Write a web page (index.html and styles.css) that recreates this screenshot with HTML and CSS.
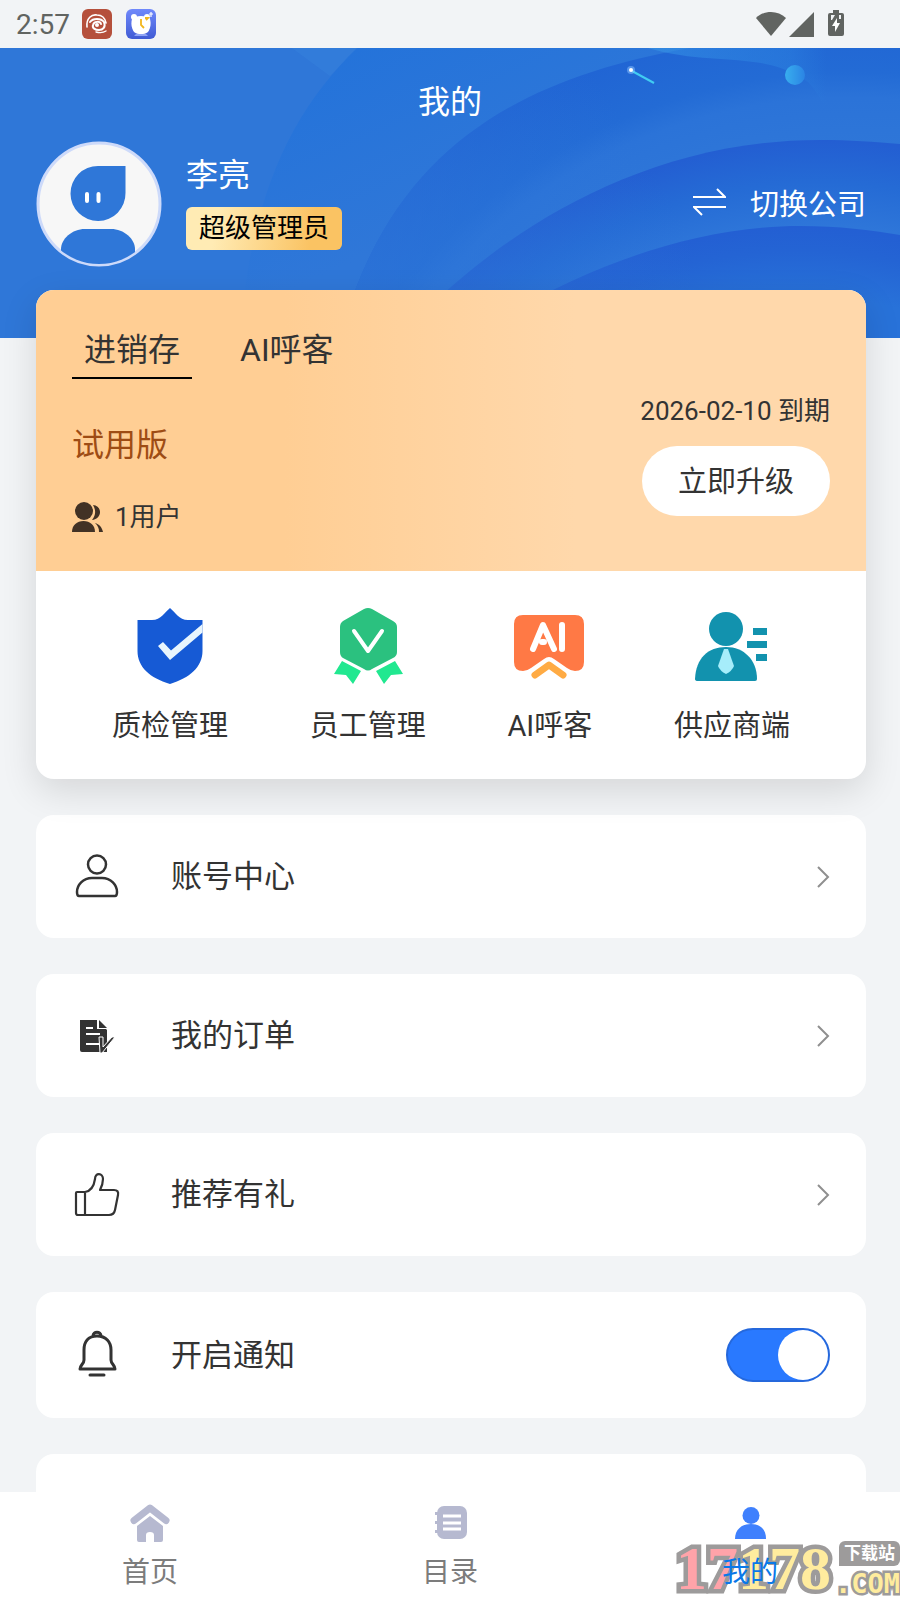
FILE: index.html
```html
<!DOCTYPE html>
<html lang="zh-CN">
<head>
    <meta charset="UTF-8">
    <meta name="viewport" content="width=device-width, initial-scale=1.0">
    <title>我的</title>
    <link rel="stylesheet" href="styles.css">
</head>
<body>
    <div class="app">
        <div class="status-bar">
            <span class="time">2:57</span>
            <svg class="app-icon" viewBox="0 0 30 30">
                <rect width="30" height="30" rx="6" fill="#b5503c"/>
                <g fill="none" stroke="#fff" stroke-linecap="round">
                    <path d="M5 18C4 9 10 5 15 6c5 0 8 3 9 8" stroke-width="1.6"/>
                    <path d="M8 13c3-4 11-4 14 0 2 5-1 8-5 8-4 0-7-2-6-5 1-4 7-4 8-1" stroke-width="2"/>
                    <path d="M14 23c4 1 7 1 10-1" stroke-width="1.4"/>
                </g>
                <circle cx="15" cy="16" r="2" fill="#fff"/>
            </svg>
            <svg class="app-icon" viewBox="0 0 30 30">
                <defs>
                    <linearGradient id="clockBg" x1="0" y1="0" x2="0" y2="1">
                        <stop offset="0" stop-color="#7089fb"/>
                        <stop offset="1" stop-color="#405bd4"/>
                    </linearGradient>
                </defs>
                <rect width="30" height="30" rx="6" fill="url(#clockBg)"/>
                <circle cx="8" cy="8" r="3" fill="#fff"/>
                <circle cx="21" cy="8" r="3" fill="#fff"/>
                <path d="M6 10c3-4 15-4 18 0 1 4 1 8-2 13-4 3-10 3-14 0-3-5-3-9-2-13z" fill="#fff"/>
                <path d="M23 5h4M25 3v5" stroke="#fff" stroke-width="1.2"/>
                <path d="M15 10v6l3 3M19 9h3l-2 2" fill="none" stroke="#f2b61c" stroke-width="1.8"/>
                <path d="M8 27h14l-2-2H10z" fill="#8fa3f5"/>
            </svg>
            <div class="status-right">
                <svg width="90" height="30" viewBox="0 0 90 30" fill="#616461">
                    <path d="M0 9C8 1 22 1 30 9L15 27z"/>
                    <path d="M33 28L58 3V28z"/>
                    <path d="M77 1h6v3h3q2 0 2 2v19q0 2-2 2H74q-2 0-2-2V6q0-2 2-2h3z"/>
                    <path d="M75 6h4l-3 5h-1zM85 6h-2v4h2z" fill="#f2f4f6"/>
                    <path d="M81 9l-5 8h3v6l5-9h-3z" fill="#fff"/>
                </svg>
            </div>
        </div>

        <main class="content">
            <header class="header">
                <svg class="header-bg" viewBox="0 0 900 290" preserveAspectRatio="xMidYMin slice">
                    <defs>
                        <radialGradient id="ringA" gradientUnits="userSpaceOnUse" cx="850" cy="600" r="640">
                            <stop offset="0.76" stop-color="#2f77d8"/>
                            <stop offset="0.86" stop-color="#2b73d8"/>
                            <stop offset="0.9" stop-color="#236bd5"/>
                            <stop offset="1" stop-color="#2064d4"/>
                        </radialGradient>
                        <radialGradient id="ringB" gradientUnits="userSpaceOnUse" cx="820" cy="632" r="540">
                            <stop offset="0.84" stop-color="#2e76d9"/>
                            <stop offset="0.92" stop-color="#256bd5"/>
                            <stop offset="1" stop-color="#235ed2"/>
                        </radialGradient>
                        <radialGradient id="ringC" gradientUnits="userSpaceOnUse" cx="800" cy="688" r="510">
                            <stop offset="0.86" stop-color="#2872d9"/>
                            <stop offset="0.95" stop-color="#2464d4"/>
                            <stop offset="1" stop-color="#235fd3"/>
                        </radialGradient>
                        <linearGradient id="ringOuter" gradientUnits="userSpaceOnUse" x1="350" y1="0" x2="430" y2="180">
                            <stop offset="0" stop-color="#2473da"/>
                            <stop offset="1" stop-color="#2f77d8"/>
                        </linearGradient>
                        <linearGradient id="fadeLeft" gradientUnits="userSpaceOnUse" x1="330" y1="290" x2="640" y2="100">
                            <stop offset="0" stop-color="#2f77d8" stop-opacity="0.8"/>
                            <stop offset="1" stop-color="#2f77d8" stop-opacity="0"/>
                        </linearGradient>
                        <linearGradient id="trail" x1="0" y1="0" x2="1" y2="0">
                            <stop offset="0" stop-color="#3a9be8" stop-opacity="0.5"/>
                            <stop offset="0.8" stop-color="#2f8be4" stop-opacity="0.35"/>
                            <stop offset="1" stop-color="#2f8be4" stop-opacity="0"/>
                        </linearGradient>
                        <linearGradient id="planet" x1="0" y1="0" x2="1" y2="0">
                            <stop offset="0" stop-color="#38aeee"/>
                            <stop offset="1" stop-color="#2b84e4"/>
                        </linearGradient>
                    </defs>
                    <rect width="900" height="290" fill="#2f77d8"/>
                    <path d="M292 0h66l-28 28z" fill="#3a86df" opacity="0.35"/>
                    <path d="M357 0C290 65 250 150 240 290H700V0z" fill="url(#ringOuter)"/>
                    <path d="M340 290C390 100 520 30 690 0H900V290z" fill="url(#ringA)"/>
                    <path d="M400 290C470 210 620 92 820 92c30 0 55 2 80 4v194z" fill="url(#ringB)"/>
                    <path d="M470 290C560 230 680 178 800 178c40 0 70 4 100 9v103z" fill="url(#ringC)"/>
                    <path d="M340 290C390 100 520 30 690 0v290z" fill="url(#fadeLeft)"/>
                    <path d="M648 0c60 18 110 4 150 28 15 6 20 20 28 32V0z" fill="url(#trail)"/>
                    <circle cx="795" cy="27" r="10" fill="url(#planet)"/>
                    <path d="M632 23l22 12" stroke="#41cdf2" stroke-width="2"/>
                    <circle cx="631" cy="22" r="4" fill="#8ec4ff" opacity="0.5"/>
                    <circle cx="631" cy="22" r="2" fill="#fff"/>
                </svg>
                <h1 class="title">我的</h1>
                <div class="profile">
                    <svg class="avatar" viewBox="0 0 126 126">
                        <defs>
                            <clipPath id="avatarClip"><circle cx="63" cy="63" r="60"/></clipPath>
                        </defs>
                        <circle cx="63" cy="63" r="61" fill="#f7f7f7" stroke="#cddafa" stroke-width="3"/>
                        <path d="M62 25h27.500v27A27.500 27.500 0 1 1 62 25z" fill="#2f77d8"/>
                        <path d="M51 53v7M62.500 53v7" stroke="#fff" stroke-width="4" stroke-linecap="round"/>
                        <path d="M25 126v-18c0-10 11-20 24-20h26c13 0 24 10 24 20v18z" fill="#2f77d8" clip-path="url(#avatarClip)"/>
                    </svg>
                    <div class="who">
                        <span class="name">李亮</span>
                        <span class="role">超级管理员</span>
                    </div>
                    <button class="switch-company" type="button">
                        <svg width="33" height="28" viewBox="0 0 33 28" fill="none" stroke="#fff" stroke-width="2">
                            <path d="M0 9h32L24 1M33 19H1l8 8"/>
                        </svg>
                        切换公司
                    </button>
                </div>
            </header>

            <section class="card">
                <div class="plan">
                    <div class="plan-tabs">
                        <button class="plan-tab active" type="button">进销存</button>
                        <button class="plan-tab" type="button">AI呼客</button>
                    </div>
                    <div class="plan-body">
                        <div class="plan-info">
                            <p class="version">试用版</p>
                            <p class="users">
                                <svg width="31" height="30" viewBox="0 0 31 30" fill="#423225">
                                    <circle cx="12" cy="9" r="9"/>
                                    <path d="M0 30c0-7 5-11 11.500-11S23 23 23 30z"/>
                                    <path d="M21 3c10 1 9 14-1 15 4-5 4-10 1-15zM23 21c4 1 7 4 8 9h-4c0-4-1-6-4-9z"/>
                                </svg>
                                1用户
                            </p>
                        </div>
                        <div class="plan-action">
                            <p class="expire">2026-02-10 到期</p>
                            <button class="upgrade" type="button">立即升级</button>
                        </div>
                    </div>
                </div>
                <nav class="shortcuts">
                    <a class="shortcut" href="#quality">
                        <svg viewBox="0 0 76 76">
                            <path d="M38 0c5 4 9 12 18 12h14.500v31c0 16-13 27-32.500 33C18 70 5.500 59 5.500 43V12H20c9 0 13-8 18-12z" fill="#165ad5"/>
                            <path d="M70.500 16v8.500L38 52 26 38l5-4 8 8.500z" fill="#e8f5fd"/>
                        </svg>
                        <span>质检管理</span>
                    </a>
                    <a class="shortcut" href="#staff">
                        <svg viewBox="0 0 76 76">
                            <path d="M34 1q4-2 8 0l21 12q4 2 4 6v25q0 4-4 6L42 61q-4 3-8 0L13 50q-3-2-3-6V19q0-4 3-6z" fill="#2bc17f"/>
                            <path d="M24 23l14 20 14-20" fill="none" stroke="#fff" stroke-width="4" stroke-linecap="round" stroke-linejoin="round"/>
                            <path d="M12 53l19 10-8 13-7-9-12-1zM65 53L46 63l8 13 7-9 12-1z" fill="#21e890"/>
                        </svg>
                        <span>员工管理</span>
                    </a>
                    <a class="shortcut" href="#ai">
                        <svg viewBox="0 0 76 76">
                            <path d="M11 7h52q9 0 9 9v38q0 9-9 9-4 0-8-3L42 51q-5-4-10 0L19 60q-4 3-8 3-9 0-9-9V16q0-9 9-9z" fill="#ff7945"/>
                            <path d="M23 67l14-10 14 10" fill="none" stroke="#ffab44" stroke-width="7" stroke-linecap="round" stroke-linejoin="round"/>
                            <path d="M21 41l10-24 11 24M50 17v24M30 34h2" fill="none" stroke="#fff" stroke-width="6" stroke-linecap="round" stroke-linejoin="round"/>
                        </svg>
                        <span>AI呼客</span>
                    </a>
                    <a class="shortcut" href="#supplier">
                        <svg viewBox="0 0 76 76" fill="#1292ae">
                            <circle cx="32" cy="21" r="17"/>
                            <path d="M1 71C2 50 14 39 32 39s31 13 31 32q0 2-2 2H4q-3 0-3-2z"/>
                            <path d="M30 41h4l6 17q-2 5-8 8-6-3-8-8z" fill="#a6edfa"/>
                            <path d="M59 20h14v7H59zM53 33h20v7H53zM62 46h11v7H62z"/>
                        </svg>
                        <span>供应商端</span>
                    </a>
                </nav>
            </section>

            <a class="row" href="#account">
                <svg class="row-icon" viewBox="0 0 50 50" fill="none" stroke="#333" stroke-width="2.500">
                    <circle cx="25" cy="12.500" r="9"/>
                    <path d="M20 26h10c9 0 15 7 15 14q0 4-2 4H7q-2 0-2-4c0-7 6-14 15-14z"/>
                </svg>
                <span class="row-label">账号中心</span>
                <svg class="arrow" viewBox="0 0 14 24"><path d="M2 2l10 10L2 22"/></svg>
            </a>
            <a class="row" href="#orders">
                <svg class="row-icon" viewBox="0 0 50 50">
                    <path d="M8 9h17v9h9l1 1v22H10q-2 0-2-2z" fill="#333"/>
                    <path d="M27 9l8 8h-8z" fill="#333"/>
                    <path d="M14 17h7M14 23h14M14 33h14" stroke="#fff" stroke-width="2"/>
                    <path d="M27 26h4v10l9-10h3L30 42h-2z" fill="#333" stroke="#fff" stroke-width="1"/>
                </svg>
                <span class="row-label">我的订单</span>
                <svg class="arrow" viewBox="0 0 14 24"><path d="M2 2l10 10L2 22"/></svg>
            </a>
            <a class="row" href="#invite">
                <svg class="row-icon" viewBox="0 0 50 50" fill="none" stroke="#333" stroke-width="2.200" stroke-linejoin="round">
                    <path d="M5 22h8c6-1 9-6 10-13 0-7 8-6 8 0 0 4-1 7-3 11h14q5 0 4 5l-3 15q-1 5-6 5H6q-2 0-2-2V23q0-1 1-1zM13 22v23"/>
                </svg>
                <span class="row-label">推荐有礼</span>
                <svg class="arrow" viewBox="0 0 14 24"><path d="M2 2l10 10L2 22"/></svg>
            </a>
            <label class="row row-toggle" for="notify">
                <svg class="row-icon" viewBox="0 0 50 50" fill="none" stroke="#333" stroke-width="3" stroke-linejoin="round">
                    <path d="M21 6c0-5 8-5 8 0M25 6c9 0 14 6 14 14v10c0 4 4 5 4 9H8c0-4 4-5 4-9V20c0-8 4-14 13-14z"/>
                    <path d="M18 45h14" stroke-linecap="round"/>
                </svg>
                <span class="row-label">开启通知</span>
                <input class="toggle" type="checkbox" id="notify" checked>
            </label>
            <div class="row"></div>
        </main>

        <nav class="tabbar">
            <a class="tab" href="#home">
                <svg viewBox="0 0 40 40" fill="#b6b9d0">
                    <path d="M4 16.500L20 4l16 12.500" fill="none" stroke="#b6b9d0" stroke-width="7" stroke-linecap="round" stroke-linejoin="round"/>
                    <path d="M7 22l13-10 13 10v14q0 2-2 2h-7v-7q0-3-4-3t-4 3v7H9q-2 0-2-2z"/>
                </svg>
                <span>首页</span>
            </a>
            <a class="tab" href="#catalog">
                <svg viewBox="0 0 40 40" fill="#b6b9d0">
                    <rect x="7" y="2" width="30" height="33" rx="7"/>
                    <path d="M5 8h4v3H5zM5 17h4v3H5zM5 26h4v3H5z"/>
                    <path d="M13 12h18M13 19h18M13 25h18" stroke="#fff" stroke-width="3"/>
                </svg>
                <span>目录</span>
            </a>
            <a class="tab active" href="#mine">
                <svg viewBox="0 0 40 40" fill="#3f80fd">
                    <circle cx="21" cy="11.500" r="8.500"/>
                    <path d="M5 35c0-9 6-15 16-15s15 6 15 15z"/>
                </svg>
                <span>我的</span>
            </a>
            <div class="site-mark">
                <div class="mark-number"><span class="mark-red">17</span>178</div>
                <div class="mark-side">
                    <span class="mark-tag">下载站</span>
                    <span class="mark-com">.COM</span>
                </div>
            </div>
        </nav>
    </div>
</body>
</html>
```
FILE: styles.css
```css
:root {
    --page-bg: #f2f4f6;
    --blue: #2f77d8;
    --text: #333333;
    --muted: #7c7c7c;
    --mark-grey: #9d9b9b;
}

* {
    margin: 0;
    padding: 0;
    box-sizing: border-box;
}

body {
    background-color: var(--page-bg);
    color: var(--text);
    font-family: Roboto, "Noto Sans CJK SC", sans-serif;
    font-weight: 400;
}

button {
    border: none;
    background: none;
    color: inherit;
    font: inherit;
    cursor: pointer;
}

a {
    color: inherit;
    text-decoration: none;
}

svg {
    display: block;
    flex-shrink: 0;
}

.app {
    display: flex;
    flex-direction: column;
    height: 100vh;
}

/* status bar */
.status-bar {
    display: flex;
    align-items: center;
    gap: 14px;
    height: 48px;
    padding: 0 54px 0 16px;
    flex-shrink: 0;
}

.time {
    font-size: 28px;
    color: #616461;
    margin-right: -2px;
}

.app-icon {
    width: 30px;
    height: 30px;
}

.status-right {
    margin-left: auto;
}

.content {
    flex: 1;
    min-height: 0;
    overflow: hidden;
}

/* header */
.header {
    position: relative;
    height: 290px;
    background-color: var(--blue);
    color: #fff;
}

.header-bg {
    position: absolute;
    inset: 0;
    width: 100%;
    height: 100%;
}

.title {
    position: relative;
    padding: 36px 0 21px;
    text-align: center;
    font-size: 32px;
    font-weight: 400;
    line-height: 36px;
}

.profile {
    position: relative;
    display: flex;
    align-items: center;
    padding: 0 34px 0 36px;
}

.avatar {
    width: 126px;
    height: 126px;
}

.who {
    display: flex;
    flex-direction: column;
    align-items: flex-start;
    gap: 16px;
    margin-left: 24px;
}

.name {
    font-size: 32px;
    line-height: 32px;
}

.role {
    padding: 0 13px;
    border-radius: 6px;
    background: linear-gradient(100deg, #ffebb4 20%, #fac363 80%);
    color: #000;
    font-size: 26px;
    line-height: 43px;
}

.switch-company {
    display: flex;
    align-items: center;
    gap: 24px;
    margin-left: auto;
    padding-bottom: 5px;
    font-size: 29px;
}

/* main card */
.card {
    position: relative;
    margin: -48px 34px 36px 36px;
    border-radius: 18px;
    background-color: #fff;
    overflow: hidden;
    box-shadow: 0 12px 36px rgba(0, 0, 0, 0.12);
}

.plan {
    padding: 36px;
    background: linear-gradient(90deg, #ffce94 30%, #ffd8ab 65%);
}

.plan-tabs {
    display: flex;
    gap: 36px;
}

.plan-tab {
    height: 53px;
    padding: 0 12px 4px;
    border-bottom: 2px solid transparent;
    font-size: 32px;
    line-height: 44px;
}

.plan-tab.active {
    border-bottom-color: #000;
}

.plan-body {
    display: flex;
    justify-content: space-between;
    margin-top: 14px;
}

.plan-info {
    padding-top: 28px;
}

.version {
    margin-bottom: 30px;
    color: #9e4c14;
    font-size: 32px;
    line-height: 48px;
}

.users {
    display: flex;
    align-items: center;
    gap: 12px;
    font-size: 26px;
    line-height: 36px;
}

.plan-action {
    display: flex;
    flex-direction: column;
    align-items: flex-end;
}

.expire {
    margin-bottom: 17px;
    font-size: 26px;
    line-height: 36px;
}

.upgrade {
    height: 70px;
    padding: 0 36px 5px;
    border-radius: 35px;
    background-color: #fff;
    font-size: 29px;
}

.shortcuts {
    display: flex;
    justify-content: space-between;
    padding: 37px 76px 33px;
}

.shortcut {
    display: flex;
    flex-direction: column;
    align-items: center;
    gap: 22px;
    font-size: 29px;
    line-height: 40px;
}

.shortcut svg {
    width: 76px;
    height: 76px;
}

/* list rows */
.row {
    display: flex;
    align-items: center;
    height: 123px;
    margin: 0 34px 36px 36px;
    padding: 0 36px;
    border-radius: 18px;
    background-color: #fff;
}

.row-toggle {
    height: 126px;
}

.row-icon {
    width: 50px;
    height: 50px;
    margin-right: 49px;
}

.row-label {
    flex: 1;
    padding-bottom: 6px;
    font-size: 31px;
}

.arrow {
    width: 14px;
    height: 24px;
    fill: none;
    stroke: #8f8f8f;
    stroke-width: 2;
}

.toggle {
    appearance: none;
    width: 104px;
    height: 54px;
    border: 2px solid #2568dc;
    border-radius: 27px;
    background-color: #2979ff;
    cursor: pointer;
}

.toggle::before {
    content: "";
    display: block;
    width: 50px;
    height: 50px;
    border-radius: 50%;
    background-color: #fff;
}

.toggle:checked::before {
    margin-left: auto;
}

.toggle:not(:checked) {
    border-color: #ccc;
    background-color: #ddd;
}

/* bottom tabs */
.tabbar {
    position: relative;
    display: flex;
    height: 108px;
    flex-shrink: 0;
    background-color: #fff;
}

.tab {
    position: relative;
    z-index: 1;
    flex: 1;
    display: flex;
    flex-direction: column;
    align-items: center;
    gap: 11px;
    padding-top: 12px;
    color: var(--muted);
    font-size: 28px;
    line-height: 36px;
}

.tab svg {
    width: 40px;
    height: 40px;
}

.tab.active {
    color: #0a78e8;
}

/* site mark sits under the tab label */
.site-mark {
    position: absolute;
    right: 0;
    bottom: 0;
    display: flex;
    align-items: flex-end;
    gap: 4px;
}

.mark-number {
    color: #ffec9e;
    font-family: "Liberation Serif", serif;
    font-size: 62px;
    font-weight: 700;
    line-height: 64px;
    -webkit-text-stroke: 9px var(--mark-grey);
    paint-order: stroke fill;
}

.mark-red {
    color: #ffa3a9;
}

.mark-side {
    display: flex;
    flex-direction: column;
    align-items: flex-end;
    gap: 2px;
}

.mark-tag {
    padding: 0 5px;
    border-radius: 6px 6px 6px 0;
    background-color: var(--mark-grey);
    color: #fff;
    font-size: 17px;
    font-weight: 700;
    line-height: 25px;
}

.mark-com {
    color: #ffec9e;
    font-family: "DejaVu Sans Mono", monospace;
    font-size: 27px;
    font-weight: 700;
    line-height: 32px;
    -webkit-text-stroke: 5px var(--mark-grey);
    paint-order: stroke fill;
}
```
